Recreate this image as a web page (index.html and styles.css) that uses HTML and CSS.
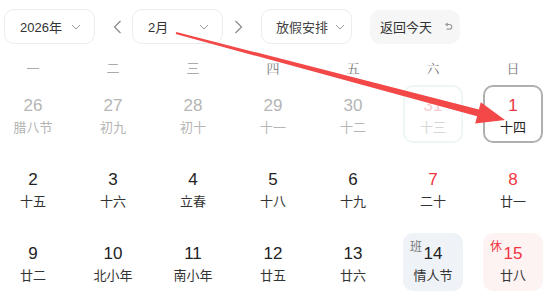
FILE: index.html
```html
<!DOCTYPE html>
<html lang="zh-CN">
<head>
    <meta charset="UTF-8">
    <title>万年历</title>
    <link rel="stylesheet" href="styles.css">
</head>
<body>
    <div class="toolbar">
        <div class="select year-select">
            <span>2026年</span>
            <svg class="chev" width="10" height="6" viewBox="0 0 10 6"><path d="M1 1l4 4 4-4" fill="none" stroke="#999" stroke-width="1"/></svg>
        </div>
        <svg class="nav prev" width="9" height="14" viewBox="0 0 9 14"><path d="M7.5 1L1.5 7l6 6" fill="none" stroke="#888" stroke-width="1.2"/></svg>
        <div class="select month-select">
            <span>2月</span>
            <svg class="chev" width="10" height="6" viewBox="0 0 10 6"><path d="M1 1l4 4 4-4" fill="none" stroke="#999" stroke-width="1"/></svg>
        </div>
        <svg class="nav next" width="9" height="14" viewBox="0 0 9 14"><path d="M1.5 1l6 6-6 6" fill="none" stroke="#888" stroke-width="1.2"/></svg>
        <div class="select holiday-select">
            <span>放假安排</span>
            <svg class="chev" width="10" height="6" viewBox="0 0 10 6"><path d="M1 1l4 4 4-4" fill="none" stroke="#999" stroke-width="1"/></svg>
        </div>
        <div class="today-btn">
            <span>返回今天</span>
            <svg width="10" height="10" viewBox="0 0 10 10"><path d="M3 2.5h3.5a2.3 2.3 0 0 1 0 4.6H3.5" fill="none" stroke="#999" stroke-width="1.1"/><path d="M4.6 0.8L2.8 2.5l1.8 1.7" fill="none" stroke="#999" stroke-width="1.1"/></svg>
        </div>
    </div>

    <div class="weekdays">
        <span>一</span><span>二</span><span>三</span><span class="dark">四</span><span class="dark">五</span><span class="dark">六</span><span class="dark">日</span>
    </div>

    <div class="calendar">
        <div class="day other"><b>26</b><i>腊八节</i></div>
        <div class="day other"><b>27</b><i>初九</i></div>
        <div class="day other"><b>28</b><i>初十</i></div>
        <div class="day other"><b>29</b><i>十一</i></div>
        <div class="day other"><b>30</b><i>十二</i></div>
        <div class="day other hover"><b class="red">31</b><i>十三</i></div>
        <div class="day today"><b class="red">1</b><i>十四</i></div>

        <div class="day"><b>2</b><i>十五</i></div>
        <div class="day"><b>3</b><i>十六</i></div>
        <div class="day"><b>4</b><i>立春</i></div>
        <div class="day"><b>5</b><i>十八</i></div>
        <div class="day"><b>6</b><i>十九</i></div>
        <div class="day"><b class="red">7</b><i>二十</i></div>
        <div class="day"><b class="red">8</b><i>廿一</i></div>

        <div class="day"><b>9</b><i>廿二</i></div>
        <div class="day"><b>10</b><i>北小年</i></div>
        <div class="day"><b>11</b><i>南小年</i></div>
        <div class="day"><b>12</b><i>廿五</i></div>
        <div class="day"><b>13</b><i>廿六</i></div>
        <div class="day work"><em>班</em><b>14</b><i>情人节</i></div>
        <div class="day rest"><em>休</em><b class="red">15</b><i>廿八</i></div>
    </div>

    <svg class="arrow" width="546" height="308" viewBox="0 0 546 308">
        <polygon points="176.3,32 478.9,109.4 480.8,102.2 505,120 475.2,123.4 477.1,116.2 175.7,34" fill="#f24848"/>
    </svg>
</body>
</html>
```

FILE: styles.css
```css
* {
    margin: 0;
    padding: 0;
    box-sizing: border-box;
}

body {
    width: 546px;
    height: 308px;
    background: #fff;
    color: #222;
    font-family: "Noto Sans CJK SC", "Liberation Sans", sans-serif;
    position: relative;
    overflow: hidden;
}

.toolbar {
    display: flex;
    align-items: center;
    padding: 9px 0 0 4px;
    height: 44px;
}

.select {
    display: flex;
    align-items: center;
    justify-content: space-between;
    width: 91px;
    height: 35px;
    padding: 0 13px 0 15px;
    border: 1px solid #ececec;
    border-radius: 10px;
    font-size: 13px;
    color: #333;
}

.select span {
    font-family: "Liberation Sans", "Noto Sans CJK SC", sans-serif;
}

.holiday-select span {
    font-family: "Noto Sans CJK SC", sans-serif;
    color: #444;
}

.holiday-select {
    padding: 0 6px 0 14px;
}

.nav.prev {
    margin: 0 10px 0 18px;
}

.nav.next {
    margin: 0 18px 0 11px;
}

.today-btn {
    display: flex;
    align-items: center;
    gap: 11px;
    margin-left: 18px;
    width: 90px;
    height: 34px;
    padding: 0 0 0 10px;
    background: #f6f6f6;
    border-radius: 10px;
    font-size: 13px;
    color: #333;
}

.weekdays,
.calendar {
    display: grid;
    grid-template-columns: repeat(7, 60px);
    column-gap: 20px;
    padding-left: 3px;
}

.weekdays {
    margin-top: 13px;
    height: 20px;
    align-items: center;
    font-size: 13px;
    color: #aaa;
    text-align: center;
}

.weekdays .dark {
    color: #777;
    font-family: "Noto Serif CJK SC", "Noto Sans CJK SC", serif;
}

.calendar {
    margin-top: 8px;
    row-gap: 16px;
}

.day {
    position: relative;
    height: 58px;
    display: flex;
    flex-direction: column;
    align-items: center;
    justify-content: center;
    border-radius: 10px;
    padding-top: 5px;
}

.day b {
    font-family: "Liberation Sans", sans-serif;
    font-weight: normal;
    font-size: 17px;
    line-height: 21px;
    color: #222;
}

.day i {
    font-style: normal;
    font-size: 13px;
    line-height: 22px;
    color: #333;
}

.day b.red {
    color: #f0343f;
}

.day.other b,
.day.other i {
    color: #b5b5b5;
}

.day.hover {
    border: 2px solid #e0f1ec;
    opacity: 0.55;
}

.day.hover b.red {
    color: #f5a0a8;
}

.day.today {
    border: 2px solid #b0b0b0;
}

.day.today i {
    color: #222;
}

.day.work {
    background: #eff3f7;
}

.day.rest {
    background: #fdf3f3;
}

.day em {
    position: absolute;
    top: 4px;
    left: 7px;
    font-style: normal;
    font-size: 12px;
    color: #777;
}

.day.rest em {
    color: #f0343f;
}

.arrow {
    position: absolute;
    top: 0;
    left: 0;
    pointer-events: none;
}
```
